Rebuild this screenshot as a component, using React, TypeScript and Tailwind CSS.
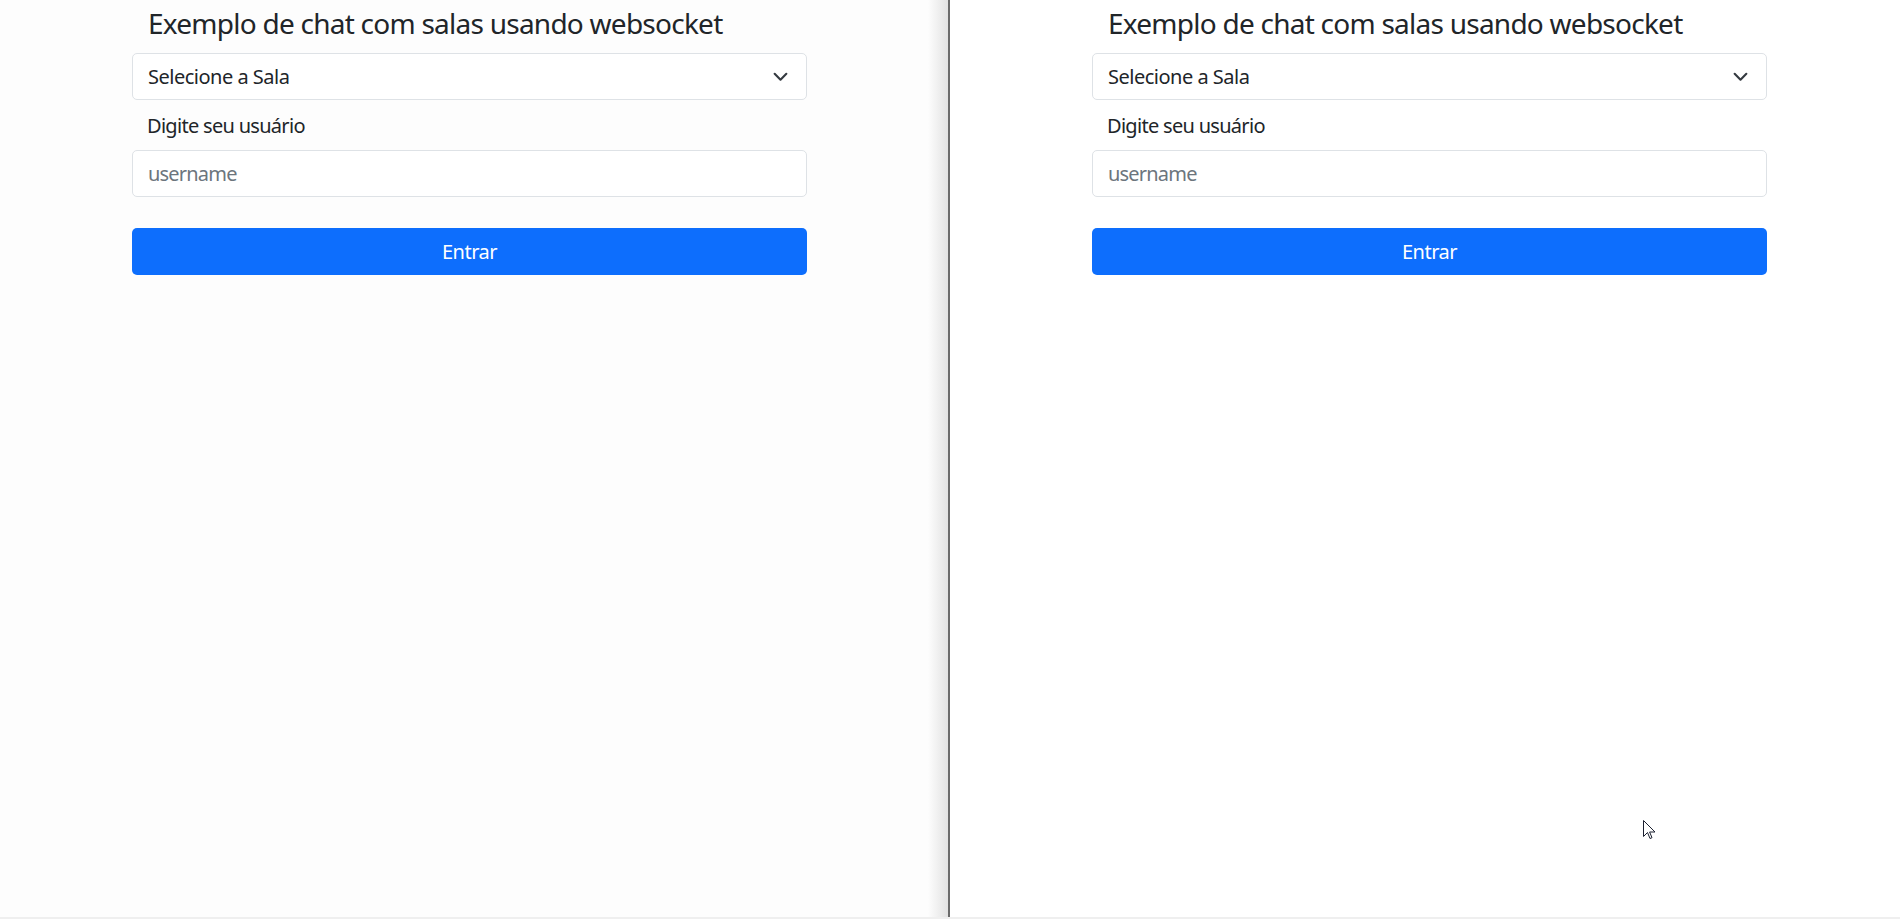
import React from "react";

function Chevron() {
  return (
    <svg width="17" height="13" viewBox="0 0 16 12" fill="none" className="shrink-0">
      <path d="m2.5 3.5 5.5 5.5 5.5-5.5" stroke="#343a40" strokeWidth="2" strokeLinecap="round" strokeLinejoin="round" />
    </svg>
  );
}

function Form({ ml }: { ml: string }) {
  return (
    <div className={`w-[675px] pt-[5px] ${ml}`}>
      <h4 className="pl-[16px] text-[28px] leading-[36px] font-normal text-[#212529] tracking-[-0.75px]">
        Exemplo de chat com salas usando websocket
      </h4>
      <div className="mt-[12px] flex h-[47px] items-center justify-between rounded-[5px] border border-[#dee2e6] bg-white pl-[15px] pr-[17px] text-[20px] text-[#212529]">
        <span className="tracking-[-0.5px]">Selecione a Sala</span>
        <Chevron />
      </div>
      <label className="mt-[11px] block pl-[15px] text-[20px] leading-[30px] text-[#212529] tracking-[-0.7px]">
        Digite seu usuário
      </label>
      <div className="mt-[9px] flex h-[47px] items-center rounded-[5px] border border-[#dee2e6] bg-white pl-[15px] text-[20px] text-[#6c757d]">
        <span className="tracking-[-0.8px]">username</span>
      </div>
      <div className="mt-[31px] flex h-[47px] items-center justify-center rounded-[5px] bg-[#0d6efd] text-[20px] text-white">
        <span className="tracking-[-0.5px]">Entrar</span>
      </div>
    </div>
  );
}

export default function App() {
  return (
    <div
      className="relative flex h-[919px] w-[1900px] overflow-hidden border-b-2 border-[#efefef] bg-white"
      style={{ fontFamily: '"Noto Sans", "Open Sans", sans-serif' }}
    >
      <div className="flex w-[948px] shrink-0">
        <div className="flex-1 bg-[#fdfdfd]">
          <Form ml="ml-[132px]" />
        </div>
        <div className="w-[20px] bg-linear-to-r from-[#fdfdfd] to-[#e2e2e2]" />
      </div>
      <div className="w-[2px] shrink-0 bg-[#6b6b6b]" />
      <div className="flex-1 bg-white">
        <Form ml="ml-[142px]" />
      </div>
      <svg
        className="absolute left-[1643px] top-[820px]"
        width="13"
        height="21"
        viewBox="0 0 13 21"
      >
        <path
          d="M0.5 0.5 L0.5 16.5 L4.5 12.5 L7 18.5 L9 17.7 L6.6 12 L12 12 Z"
          fill="white"
          stroke="#1b2030"
          strokeWidth="1"
          strokeLinejoin="miter"
        />
      </svg>
    </div>
  );
}
